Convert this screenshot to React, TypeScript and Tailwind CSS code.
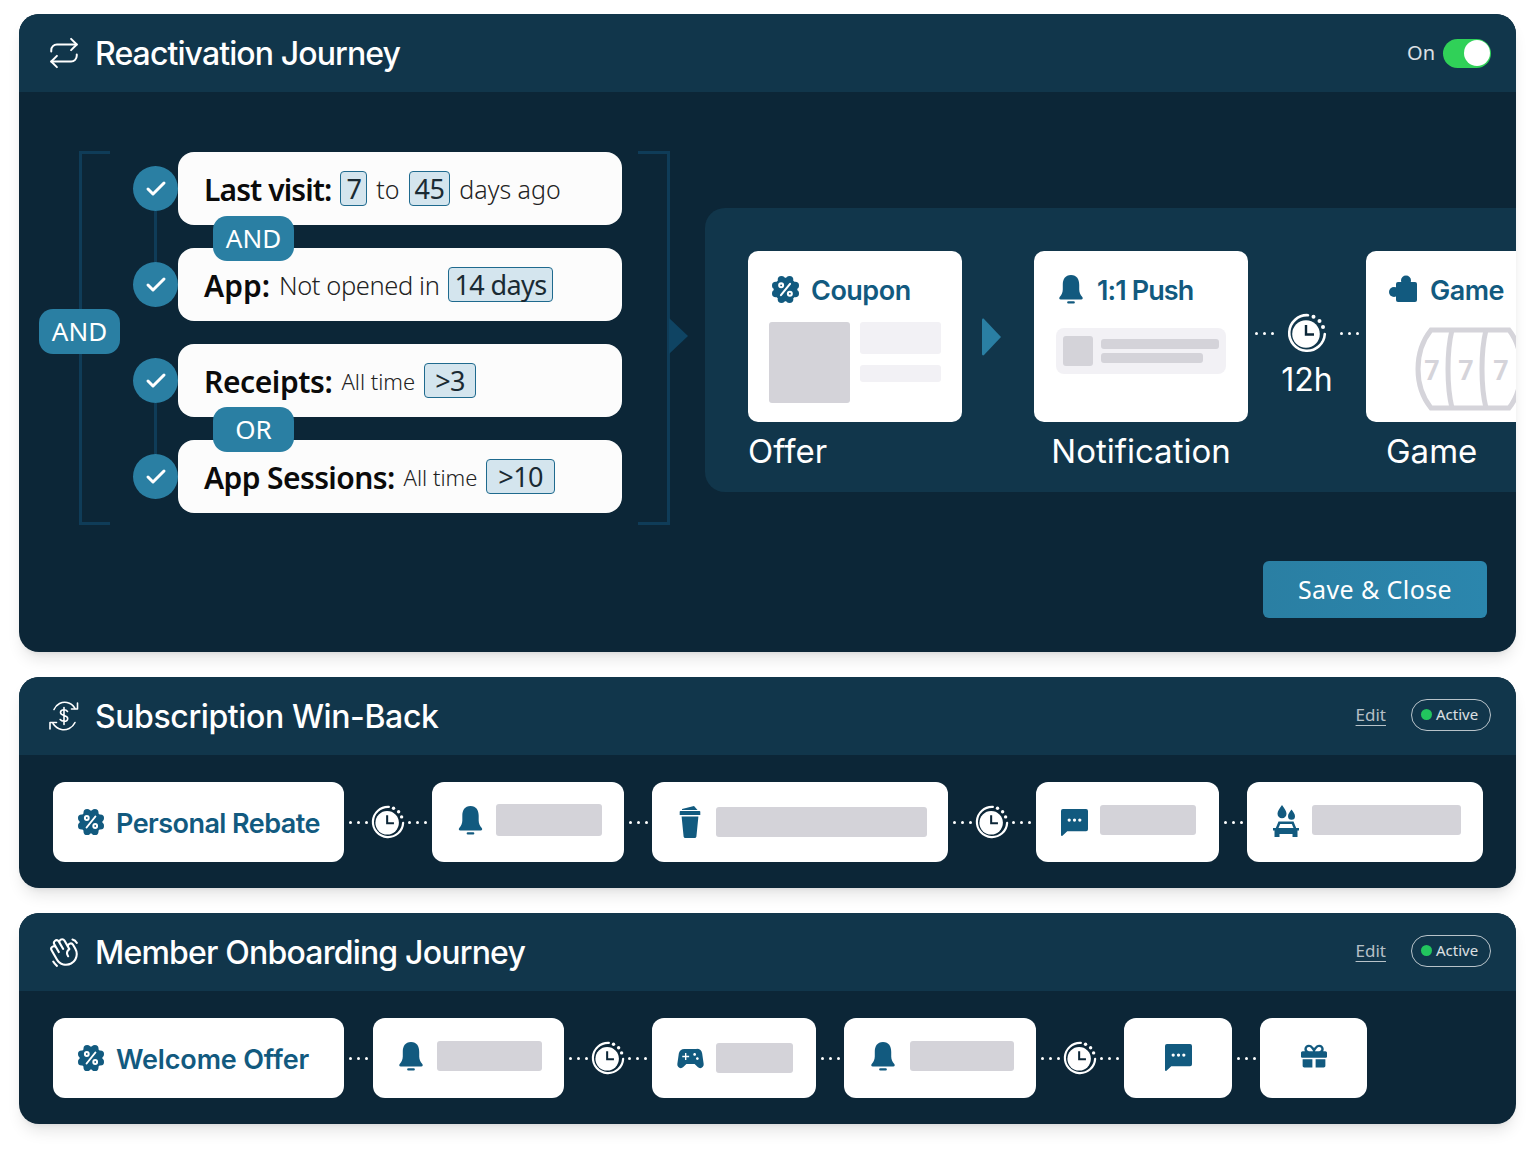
import React from 'react';
import { Repeat, Check } from 'lucide-react';
import { PiHandWaving } from 'react-icons/pi';
import { FaGift } from 'react-icons/fa';
import { MdSportsEsports } from 'react-icons/md';

const titleFont = "font-['Inter',sans-serif]";
const ruleFont = "font-['Noto_Sans',sans-serif]";

const RebateIcon = ({ className = '' }: { className?: string }) => (
  <svg viewBox="0 0 28 28" className={className}>
    <g fill="#125a7f">
      <circle cx="14" cy="14" r="11.4" />
      {[0, 45, 90, 135, 180, 225, 270, 315].map((a) => (
        <circle key={a} cx={14 + 10.2 * Math.cos(((a + 22.5) * Math.PI) / 180)} cy={14 + 10.2 * Math.sin(((a + 22.5) * Math.PI) / 180)} r="3.6" />
      ))}
    </g>
    <g fill="none" stroke="#fff" strokeWidth="2">
      <path d="M18.4 8.5l-8.8 11" strokeLinecap="round" />
      <circle cx="9.8" cy="10" r="1.9" />
      <circle cx="18.2" cy="18" r="1.9" />
    </g>
  </svg>
);

const BellIcon = ({ className = '' }: { className?: string }) => (
  <svg viewBox="0 0 26 30" className={className}>
    <path fill="#125a7f" d="M13 0C7 0 4.5 4.5 4.5 10v5c0 3-1.2 5.5-3 7.5-1.2 1.3-.8 2.8 1 2.8h21c1.8 0 2.2-1.5 1-2.8-1.8-2-3-4.5-3-7.5v-5C21.5 4.5 19 0 13 0z" />
    <rect x="9" y="27.2" width="8" height="2.4" rx="1.2" fill="#125a7f" />
  </svg>
);

const CupIcon = ({ className = '' }: { className?: string }) => (
  <svg viewBox="0 0 22 32" className={className}>
    <path fill="#125a7f" d="M3 3 15 0l3.5 4H3zM1.5 5h19c.5 0 .8.3.8.8V9H.7V5.800c0-.5.3-.8.8-.8zM2.600 10.500h16.800l-2 20c-.1.9-.8 1.500-1.800 1.500H6.400c-1 0-1.700-.6-1.800-1.500z" />
  </svg>
);

const ChatIcon = ({ className = '' }: { className?: string }) => (
  <svg viewBox="0 0 28 28" className={className}>
    <path fill="#125a7f" d="M2 0h24a2 2 0 0 1 2 2v19a2 2 0 0 1-2 2H6.500l-5 4.700c-.6.5-1.500.1-1.500-.7V2a2 2 0 0 1 2-2z" />
    <g fill="#fff">
      <circle cx="8.500" cy="11.500" r="1.700" />
      <circle cx="14" cy="11.500" r="1.700" />
      <circle cx="19.500" cy="11.500" r="1.700" />
    </g>
  </svg>
);

const CarWashIcon = ({ className = '' }: { className?: string }) => (
  <svg viewBox="0 0 26 32" className={className}>
    <g fill="#125a7f">
      <path d="M9 0c2.500 3.500 4.500 6 4.500 8.800a4.500 4.500 0 0 1-9 0C4.500 6 6.500 3.500 9 0z" />
      <path d="M18.500 4.500c1.800 2.500 3.500 4.500 3.500 6.700a3.500 3.500 0 0 1-7 0c0-2.200 1.700-4.200 3.500-6.700z" />
      <path d="M5.500 16.500h15l2.700 6.500H26v2.500h-1.500V32h-5v-3h-13v3h-5v-6.500H0V23h2.800z" />
    </g>
    <path fill="#fff" d="M7.200 19h11.600l1.700 4h-15z" />
  </svg>
);

const PuzzleIcon = ({ className = '' }: { className?: string }) => (
  <svg viewBox="0 0 28 28" className={className}>
    <g fill="#125a7f">
      <rect x="7" y="7" width="21" height="20" rx="2" />
      <circle cx="17" cy="5.500" r="5" />
      <circle cx="5" cy="17" r="5" />
    </g>
  </svg>
);

const ClockIcon = ({ className = '' }: { className?: string }) => (
  <svg viewBox="0 0 40 40" className={className}>
    <path d="M21 2.200A17.800 17.800 0 1 0 37.800 21" fill="none" stroke="#fff" strokeWidth="2.600" strokeLinecap="round" />
    <circle cx="19" cy="21" r="13.800" fill="#fff" />
    <path d="M19 12v9.500h8" fill="none" stroke="#0c2637" strokeWidth="2.400" />
    <circle cx="26.500" cy="3.800" r="2" fill="#fff" />
    <circle cx="32.500" cy="8" r="2" fill="#fff" />
    <circle cx="36" cy="14" r="2" fill="#fff" />
  </svg>
);

const SubscriptionIcon = ({ className = '' }: { className?: string }) => (
  <svg viewBox="0 0 32 32" fill="none" stroke="#fff" strokeWidth="1.600" strokeLinecap="round" strokeLinejoin="round" className={className}>
    <path d="M6 9.500C8.500 4 14 1.500 19 2.500c3.500.7 6 2.600 8 5.800" />
    <path d="M29.500 3v6h-6" />
    <path d="M27 22.500C24.500 28 18.500 30.500 13.500 29.500 9.500 28.700 7 26.500 5 23.500" />
    <path d="M2 29v-6.500h6.500" />
    <path d="M19.500 11.500c-.8-1.200-2-1.700-3.500-1.700-2 0-3.500 1-3.500 2.800 0 3.800 7.200 2 7.200 5.800 0 1.800-1.600 2.900-3.700 2.900-1.600 0-3-.6-3.800-1.800M16 7.500v17" />
  </svg>
);

const SlotIcon = ({ className = '' }: { className?: string }) => (
  <svg viewBox="0 0 110 84" className={className} fill="none" stroke="#d5d4da" strokeWidth="5">
    <path d="M16 3h78c8 10 12 24 12 39s-4 29-12 39H16C8 71 3 57 3 42S8 13 16 3z" />
    <path d="M37 3c-3 12-4 25-4 39s1 27 4 39M71 3c-3 12-4 25-4 39s1 27 4 39" />
    <g fill="#d5d4da" stroke="none" fontFamily="Roboto, sans-serif" fontWeight="700" fontSize="27" textAnchor="middle">
      <text x="17" y="53">7</text>
      <text x="51" y="53">7</text>
      <text x="86" y="53">7</text>
    </g>
  </svg>
);

const Dots = ({ className = '' }: { className?: string }) => (
  <div className={`flex items-center gap-[5px] ${className}`}>
    <span className="w-[3px] h-[3px] rounded-full bg-white" />
    <span className="w-[3px] h-[3px] rounded-full bg-white" />
    <span className="w-[3px] h-[3px] rounded-full bg-white" />
  </div>
);

const Link = () => (
  <div className="w-[28px] shrink-0 flex justify-center">
    <Dots />
  </div>
);

const Wait = () => (
  <div className="w-[88px] shrink-0 flex items-center justify-center gap-[3px]">
    <Dots />
    <ClockIcon className="w-[34px] h-[34px]" />
    <Dots />
  </div>
);

const Bar = ({ className = '' }: { className?: string }) => <div className={`bg-[#d4d3d9] rounded-[3px] ${className}`} />;

const Step = ({ className = '', children }: { className?: string; children: React.ReactNode }) => (
  <div className={`h-[80px] shrink-0 bg-white rounded-[12px] flex items-center ${className}`}>{children}</div>
);

const Lead = ({ label, className = '' }: { label: string; className?: string }) => (
  <Step className="w-[291px] pl-[24px]">
    <RebateIcon className="w-[28px] h-[28px]" />
    <span className={`ml-[11px] mt-[2px] text-[27px] leading-none font-semibold text-[#125a7f] ${titleFont} ${className}`}>{label}</span>
  </Step>
);

const Status = () => (
  <div className="ml-auto -mt-[3px] flex items-center gap-[25px]">
    <span className={`text-[17px] text-white/70 underline underline-offset-4 ${ruleFont}`}>Edit</span>
    <div className="w-[80px] h-[32px] rounded-full border-[1.5px] border-white/70 flex items-center pl-[9px] gap-[4px]">
      <span className="w-[11px] h-[11px] rounded-full bg-[#22c55e]" />
      <span className={`text-[15px] text-white/85 ${ruleFont}`}>Active</span>
    </div>
  </div>
);

const Header = ({ icon, title, right, className = '' }: { icon: React.ReactNode; title: string; right: React.ReactNode; className?: string }) => (
  <div className="h-[78px] bg-[#11364b] flex items-center pl-[28px] pr-[25px]">
    <div className="w-[34px] flex justify-center">{icon}</div>
    <h2 className={`ml-[14px] pt-px text-[32px] font-medium text-white ${titleFont} ${className}`}>{title}</h2>
    {right}
  </div>
);

const Value = ({ children, className = '' }: { children: React.ReactNode; className?: string }) => (
  <span className={`h-[35px] pt-px flex items-center bg-[#d4e5ee] border-[1.5px] border-[#1f6a8e] rounded-[4px] text-[27px] tracking-[-0.6px] text-[#1a2a33] ${className}`}>
    {children}
  </span>
);

const Pill = ({ label, className = '' }: { label: string; className?: string }) => (
  <div className={`absolute w-[81px] h-[45px] rounded-[14px] bg-[#2a7fa3] text-white text-[26px] flex items-center justify-center ${ruleFont} ${className}`}>
    {label}
  </div>
);

const Rule = ({ label, labelClass = '', children }: { label: string; labelClass?: string; children: React.ReactNode }) => (
  <div className="flex items-center h-[73px]">
    <div className="w-[45px] h-[45px] rounded-full bg-[#2a7fa3] flex items-center justify-center shrink-0">
      <Check size={24} strokeWidth={3} className="text-white" />
    </div>
    <div className={`w-[444px] h-[73px] bg-[#fcfcfc] rounded-[16px] pl-[26px] flex items-center gap-[9px] text-[#222] ${ruleFont}`}>
      <span className={`pt-[3px] text-[30px] leading-none font-semibold text-[#0b0b0b] ${labelClass}`}>{label}</span>
      {children}
    </div>
  </div>
);

const Note = ({ children, className = '' }: { children: React.ReactNode; className?: string }) => (
  <span className={`pt-[2px] font-light ${className}`}>{children}</span>
);

const FlowLabel = ({ children, className = '' }: { children: React.ReactNode; className?: string }) => (
  <div className={`mt-[11px] text-[33px] leading-[36px] text-white ${titleFont} ${className}`}>{children}</div>
);

const cardHead = `mt-[2px] text-[27px] leading-none font-semibold tracking-[-0.5px] text-[#125a7f] ${titleFont}`;

export default function App() {
  return (
    <div className="min-h-[1150px] bg-white pt-[14px] pl-[19px] pr-[20px] flex flex-col gap-[25px]">
      {/* Reactivation */}
      <section className="h-[638px] rounded-[20px] overflow-hidden bg-[#0c2637] shadow-lg">
        <Header
          icon={<Repeat size={34} strokeWidth={1.4} className="text-white" />}
          title="Reactivation Journey"
          className="tracking-[-0.9px]"
          right={
            <div className="ml-auto flex items-center gap-[8px]">
              <span className={`text-[20px] text-white/85 ${ruleFont}`}>On</span>
              <div className="w-[48px] h-[29px] rounded-full bg-[#30d158] flex items-center justify-end pr-px">
                <span className="w-[26px] h-[26px] rounded-full bg-white" />
              </div>
            </div>
          }
        />
        <div className="flex items-start pl-[20px]">
          {/* Rule group */}
          <div className="relative w-[649px] h-[374px] mt-[59px] shrink-0">
            <div className="absolute left-[40px] top-0 bottom-0 w-[31px] border-[3px] border-r-0 border-[#0f3c58]" />
            <div className="absolute left-[599px] top-0 bottom-0 w-[32px] border-[3px] border-l-0 border-[#0f3c58]" />
            <div className="absolute left-[115px] top-[60px] w-[3px] h-[52px] bg-[#0f3c58]" />
            <div className="absolute left-[115px] top-[252px] w-[3px] h-[52px] bg-[#0f3c58]" />
            <svg viewBox="0 0 19 36" className="absolute left-[630px] top-[167px] w-[19px] h-[36px]">
              <path d="M0 0l19 18L0 36z" fill="#0f4463" />
            </svg>
            <div className="absolute left-[94px] top-px flex flex-col gap-[23px]">
              <Rule label="Last visit:" labelClass="tracking-[-0.9px]">
                <Value className="px-[5px]">7</Value>
                <Note className="text-[25px]">to</Note>
                <Value className="px-[5px]">45</Value>
                <Note className="text-[25px]">days ago</Note>
              </Rule>
              <Rule label="App:">
                <Note className="text-[25.5px] tracking-[-0.4px]">Not opened in</Note>
                <Value className="px-[5px]">14 days</Value>
              </Rule>
              <Rule label="Receipts:" labelClass="tracking-[-0.4px]">
                <Note className="text-[22px]">All time</Note>
                <Value className="px-[10px]">&gt;3</Value>
              </Rule>
              <Rule label="App Sessions:" labelClass="tracking-[-0.6px]">
                <Note className="text-[22px]">All time</Note>
                <Value className="px-[11px]">&gt;10</Value>
              </Rule>
            </div>
            <Pill label="AND" className="left-0 top-[158px]" />
            <Pill label="AND" className="left-[174px] top-[65px]" />
            <Pill label="OR" className="left-[174px] top-[256px]" />
          </div>

          {/* Offer flow */}
          <div className="flex-1 min-w-0 h-[284px] mt-[116px] ml-[17px] bg-[#11364b] rounded-l-[20px] overflow-hidden flex pl-[43px] pt-[43px]">
            <div className="w-[214px] shrink-0">
              <div className="h-[171px] bg-white rounded-[10px] pl-[21px] pr-[21px] pt-[24px]">
                <div className="flex items-center gap-[11px] pl-[2px] h-[28px]">
                  <RebateIcon className="w-[29px] h-[29px]" />
                  <span className={cardHead}>Coupon</span>
                </div>
                <div className="flex gap-[10px] mt-[19px]">
                  <Bar className="w-[81px] h-[81px]" />
                  <div className="flex-1 flex flex-col gap-[11px]">
                    <div className="h-[32px] rounded-[3px] bg-[#f2f1f5]" />
                    <div className="h-[17px] rounded-[3px] bg-[#f2f1f5]" />
                  </div>
                </div>
              </div>
              <FlowLabel>Offer</FlowLabel>
            </div>
            <div className="w-[72px] shrink-0 h-[171px] flex items-center pl-[20px] pt-[1px]">
              <svg viewBox="0 0 20 38" className="w-[20px] h-[38px]">
                <path d="M2 1l17 18L2 37c-1 1-2 0-2-1V2c0-1 1-2 2-1z" fill="#2a7fa3" />
              </svg>
            </div>
            <div className="w-[214px] shrink-0">
              <div className="h-[171px] bg-white rounded-[10px] px-[22px] pt-[24px]">
                <div className="flex items-center gap-[13px] pl-[2px] h-[28px]">
                  <BellIcon className="w-[26px] h-[29px]" />
                  <span className={`${cardHead} tracking-[-0.9px]`}>1:1 Push</span>
                </div>
                <div className="h-[46px] mt-[25px] rounded-[8px] bg-[#f2f1f5] flex items-center pl-[7px] gap-[8px]">
                  <Bar className="w-[30px] h-[30px]" />
                  <div className="flex flex-col gap-[4px]">
                    <Bar className="w-[118px] h-[10px]" />
                    <Bar className="w-[102px] h-[10px]" />
                  </div>
                </div>
              </div>
              <FlowLabel className="text-center">Notification</FlowLabel>
            </div>
            <div className="w-[118px] shrink-0 flex flex-col items-center pt-[62px]">
              <div className="flex items-center gap-[13px]">
                <Dots />
                <ClockIcon className="w-[40px] h-[40px]" />
                <Dots />
              </div>
              <span className={`mt-[8px] text-[32px] leading-[38px] text-white ${titleFont}`}>12h</span>
            </div>
            <div className="w-[214px] shrink-0">
              <div className="h-[171px] bg-white rounded-[10px] pl-[23px] pt-[24px]">
                <div className="flex items-center gap-[13px] h-[28px]">
                  <PuzzleIcon className="w-[28px] h-[28px]" />
                  <span className={cardHead}>Game</span>
                </div>
                <SlotIcon className="w-[110px] h-[84px] ml-[26px] mt-[24px]" />
              </div>
              <FlowLabel className="pl-[20px]">Game</FlowLabel>
            </div>
          </div>
        </div>
        <div className="flex justify-end pr-[29px] mt-[36px]">
          <button className={`w-[224px] h-[57px] rounded-[6px] bg-gradient-to-r from-[#2a7fa3] to-[#2b86ad] text-white text-[25px] tracking-[0.4px] ${ruleFont}`}>Save &amp; Close</button>
        </div>
      </section>

      {/* Subscription */}
      <section className="rounded-[20px] overflow-hidden bg-[#0c2637] shadow-lg">
        <Header icon={<SubscriptionIcon className="w-[32px] h-[32px]" />} title="Subscription Win-Back" className="tracking-[-0.4px]" right={<Status />} />
        <div className="flex items-center pl-[34px] pt-[27px] pb-[26px]">
          <Lead label="Personal Rebate" className="tracking-[-0.55px]" />
          <Wait />
          <Step className="w-[192px] pl-[26px] gap-[13px]">
            <BellIcon className="w-[25px] h-[29px] -mt-[3px]" />
            <Bar className="w-[106px] h-[32px] -mt-[5px]" />
          </Step>
          <Link />
          <Step className="w-[296px] pl-[27px] gap-[15px]">
            <CupIcon className="w-[22px] h-[32px]" />
            <Bar className="w-[211px] h-[30px]" />
          </Step>
          <Wait />
          <Step className="w-[183px] pl-[25px] gap-[12px]">
            <ChatIcon className="w-[27px] h-[27px]" />
            <Bar className="w-[96px] h-[30px] -mt-[4px]" />
          </Step>
          <Link />
          <Step className="w-[236px] pl-[26px] gap-[13px]">
            <CarWashIcon className="w-[26px] h-[32px] -mt-[3px]" />
            <Bar className="w-[149px] h-[30px] -mt-[4px]" />
          </Step>
        </div>
      </section>

      {/* Onboarding */}
      <section className="rounded-[20px] overflow-hidden bg-[#0c2637] shadow-lg">
        <Header icon={<PiHandWaving className="w-[38px] h-[38px] text-white" />} title="Member Onboarding Journey" className="tracking-[-0.8px]" right={<Status />} />
        <div className="flex items-center pl-[34px] pt-[27px] pb-[26px]">
          <Lead label="Welcome Offer" className="tracking-[-0.15px]" />
          <Link />
          <Step className="w-[191px] ml-px pl-[25px] gap-[13px]">
            <BellIcon className="w-[26px] h-[29px] -mt-[3px]" />
            <Bar className="w-[105px] h-[30px] -mt-[5px]" />
          </Step>
          <Wait />
          <Step className="w-[164px] pl-[22px] gap-[9px]">
            <MdSportsEsports className="w-[33px] h-[33px] text-[#125a7f]" />
            <Bar className="w-[77px] h-[30px]" />
          </Step>
          <Link />
          <Step className="w-[192px] pl-[26px] gap-[14px]">
            <BellIcon className="w-[26px] h-[29px] -mt-[3px]" />
            <Bar className="w-[104px] h-[30px] -mt-[5px]" />
          </Step>
          <Wait />
          <Step className="w-[108px] justify-center">
            <ChatIcon className="w-[27px] h-[27px] -mt-[1px]" />
          </Step>
          <Link />
          <Step className="w-[107px] justify-center">
            <FaGift className="w-[26px] h-[26px] text-[#125a7f] -mt-[4px]" />
          </Step>
        </div>
      </section>
    </div>
  );
}
